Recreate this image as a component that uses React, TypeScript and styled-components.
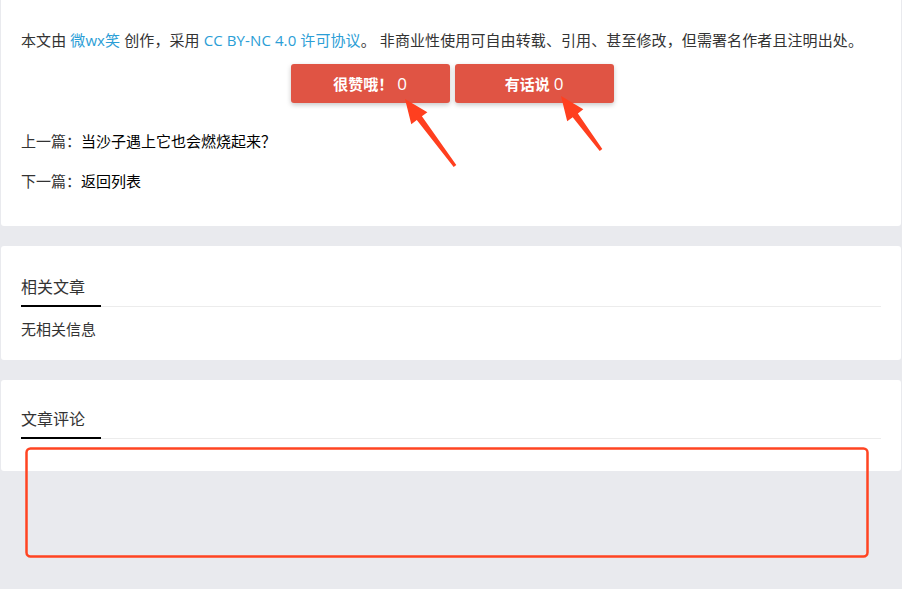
import styled, { createGlobalStyle } from "styled-components";

const GlobalStyle = createGlobalStyle`
  html, body {
    margin: 0;
    padding: 0;
    background: #e9eaee;
  }
  body {
    font-family: "Open Sans", "Noto Sans CJK SC", sans-serif;
    font-size: 15px;
    color: #333;
  }
`;

const Page = styled.div`
  position: relative;
  display: flex;
  flex-direction: column;
  gap: 20px;
  padding: 0 1px 0 1px;
  min-height: 589px;
  box-sizing: border-box;
`;

const Card = styled.div<{ $pt: number; $pb: number }>`
  background: #fff;
  border-radius: 0 0 3px 3px;
  padding: ${(p) => p.$pt}px 20px ${(p) => p.$pb}px 20px;
  & + & {
    border-radius: 3px;
  }
`;

const Notice = styled.p`
  margin: 0;
  line-height: 24px;
  white-space: nowrap;
  letter-spacing: 0.1px;
  a {
    color: #2b9ed6;
    text-decoration: none;
  }
`;

const ButtonRow = styled.div`
  display: flex;
  justify-content: center;
  gap: 5px;
  margin-top: 12px;
  padding-left: 2px;
`;

const RedButton = styled.button`
  width: 159px;
  height: 39px;
  border: none;
  border-radius: 3px;
  background: #e05444;
  color: #fff;
  font-family: "Open Sans", "Noto Sans CJK SC", sans-serif;
  font-size: 15px;
  font-weight: 700;
  box-shadow: 0 2px 5px rgba(0, 0, 0, 0.22);
  cursor: pointer;
  span {
    font-weight: 400;
    font-size: 17px;
    margin-left: 4px;
  }
`;

const NavLine = styled.div<{ $mt: number }>`
  margin-top: ${(p) => p.$mt}px;
  line-height: 24px;
  color: #333;
  a {
    color: #000;
    text-decoration: none;
  }
`;

const SectionHead = styled.div`
  border-bottom: 1px solid #ececec;
  line-height: 30px;
  font-size: 16px;
  color: #333;
  span {
    display: inline-block;
    width: 80px;
    padding-bottom: 3px;
    border-bottom: 2px solid #000;
    margin-bottom: -1px;
  }
`;

const Empty = styled.div`
  margin-top: 10px;
  line-height: 24px;
`;

const Overlay = styled.svg`
  position: absolute;
  left: 0;
  top: 0;
  pointer-events: none;
`;

function arrowPoints(tail: [number, number], tip: [number, number]) {
  const dx = tip[0] - tail[0];
  const dy = tip[1] - tail[1];
  const len = Math.hypot(dx, dy);
  const ux = dx / len;
  const uy = dy / len;
  const nx = -uy;
  const ny = ux;
  const headLen = 24;
  const headW = 10;
  const neckW = 3.2;
  const tailW = 1.6;
  const bx = tip[0] - ux * headLen;
  const by = tip[1] - uy * headLen;
  const pts: [number, number][] = [
    [tail[0] + nx * tailW, tail[1] + ny * tailW],
    [bx + nx * neckW, by + ny * neckW],
    [bx + nx * headW, by + ny * headW],
    tip,
    [bx - nx * headW, by - ny * headW],
    [bx - nx * neckW, by - ny * neckW],
    [tail[0] - nx * tailW, tail[1] - ny * tailW],
  ];
  return pts.map((p) => p.map((v) => v.toFixed(1)).join(",")).join(" ");
}

export default function App() {
  return (
    <>
      <GlobalStyle />
      <Page>
        <Card $pt={28} $pb={33}>
          <Notice>
            本文由 <a href="#">微wx笑</a> 创作，采用{" "}
            <a href="#">CC BY-NC 4.0 许可协议</a>。
            非商业性使用可自由转载、引用、甚至修改，但需署名作者且注明出处。
          </Notice>
          <ButtonRow>
            <RedButton>
              很赞哦！<span>0</span>
            </RedButton>
            <RedButton>
              有话说<span>0</span>
            </RedButton>
          </ButtonRow>
          <NavLine $mt={26}>
            上一篇：<a href="#">当沙子遇上它也会燃烧起来？</a>
          </NavLine>
          <NavLine $mt={16}>
            下一篇：<a href="#">返回列表</a>
          </NavLine>
        </Card>
        <Card $pt={26} $pb={19}>
          <SectionHead>
            <span>相关文章</span>
          </SectionHead>
          <Empty>无相关信息</Empty>
        </Card>
        <Card $pt={24} $pb={32}>
          <SectionHead>
            <span>文章评论</span>
          </SectionHead>
        </Card>
        <Overlay width="902" height="589" viewBox="0 0 902 589">
          <polygon points={arrowPoints([455, 166], [405, 99])} fill="#ff3f1f" />
          <polygon points={arrowPoints([601, 150], [561, 96])} fill="#ff3f1f" />
          <rect x="26.5" y="448.5" width="841" height="108" rx="4" fill="none" stroke="#ff4422" strokeWidth="2.5" />
        </Overlay>
      </Page>
    </>
  );
}
